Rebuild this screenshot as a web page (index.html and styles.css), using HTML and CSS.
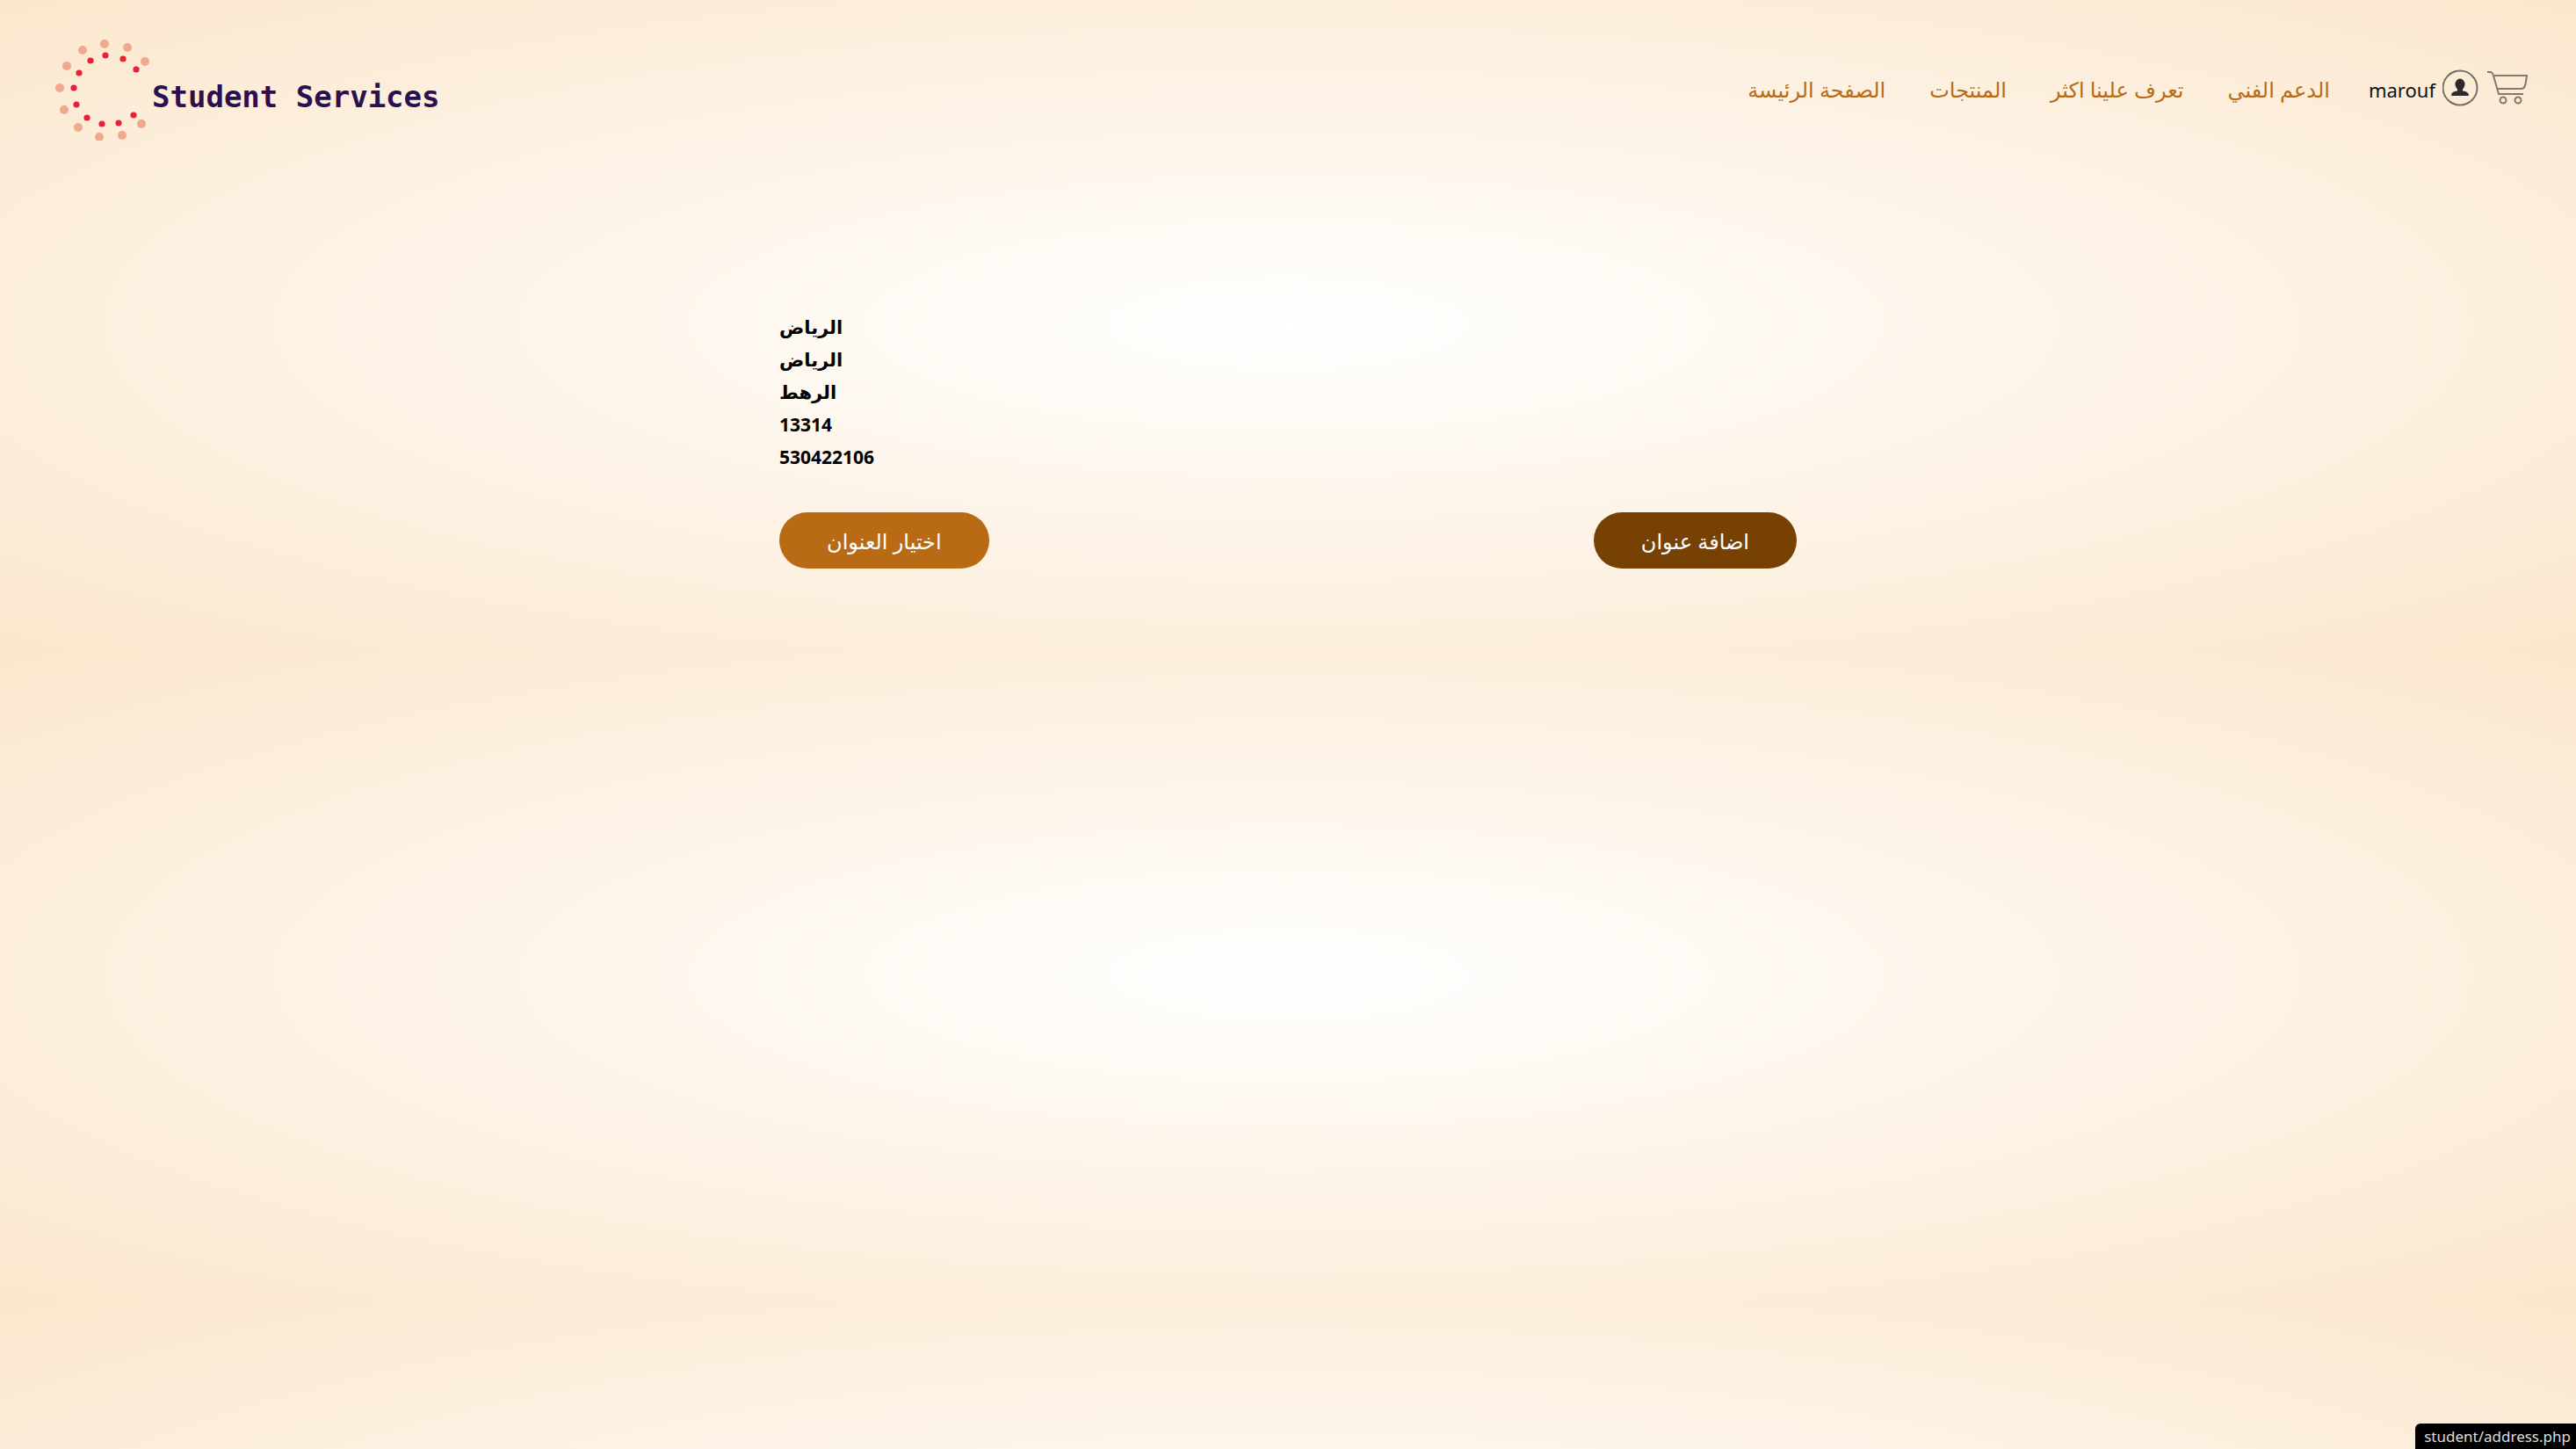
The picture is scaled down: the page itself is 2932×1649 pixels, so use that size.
FILE: index.html
```html
<!DOCTYPE html>
<html lang="ar">
<head>
<meta charset="utf-8">
<title>Student Services</title>
<link rel="stylesheet" href="styles.css">
</head>
<body>
<header class="header">
  <a class="logo" href="#">
    <svg class="logo-mark" width="110" height="120" viewBox="0 0 110 120" aria-hidden="true">
      <g fill="#efa98c">
        <circle cx="56" cy="10" r="5"/><circle cx="82" cy="14" r="5"/><circle cx="102" cy="30" r="5"/>
        <circle cx="31" cy="17" r="5"/><circle cx="13" cy="35" r="5"/><circle cx="5" cy="60" r="5"/>
        <circle cx="10" cy="85" r="5"/><circle cx="26" cy="105" r="5"/><circle cx="50" cy="116" r="5"/>
        <circle cx="76" cy="114" r="5"/><circle cx="98" cy="101" r="5"/>
      </g>
      <g fill="#ea2037">
        <circle cx="57" cy="23" r="3.6"/><circle cx="77" cy="27" r="3.6"/><circle cx="92" cy="39" r="3.6"/>
        <circle cx="40" cy="29" r="3.6"/><circle cx="27" cy="43" r="3.6"/><circle cx="21" cy="60" r="3.6"/>
        <circle cx="24" cy="79" r="3.6"/><circle cx="36" cy="94" r="3.6"/><circle cx="53" cy="101" r="3.6"/>
        <circle cx="72" cy="100" r="3.6"/><circle cx="89" cy="91" r="3.6"/>
      </g>
    </svg>
    <span class="logo-text">Student Services</span>
  </a>
  <div class="menu">
    <nav class="nav">
      <a href="#">الصفحة الرئيسة</a>
      <a href="#">المنتجات</a>
      <a href="#">تعرف علينا اكثر</a>
      <a href="#">الدعم الفني</a>
    </nav>
    <div class="account">
      <a class="user" href="#"><span class="user-name">marouf</span>
        <svg width="42" height="42" viewBox="0 0 42 42" aria-hidden="true">
          <circle cx="20" cy="21" r="19.5" fill="none" stroke="#77706a" stroke-width="2"/>
          <ellipse cx="20" cy="17" rx="5.5" ry="6.5" fill="#2b2b2d"/>
          <path d="M17 21h6v3.500q7 .500 7 5.500H10q0-5 7-5.500z" fill="#2b2b2d"/>
        </svg>
      </a>
      <a class="cart" href="#" aria-label="السلة">
        <svg width="48" height="42" viewBox="0 0 48 42" fill="none" stroke="#82796f" stroke-width="2" aria-hidden="true">
          <path d="M1 3h3q3 0 4 4l6 21h28M9 7h37l-1 7q-1 8-5 8H12"/>
          <circle cx="19" cy="35" r="3.5"/><circle cx="36" cy="35" r="3.5"/>
        </svg>
      </a>
    </div>
  </div>
</header>
<main class="content">
  <address class="address">
    <span>الرياض</span>
    <span>الرياض</span>
    <span>الرهط</span>
    <span>13314</span>
    <span>530422106</span>
  </address>
  <div class="actions">
    <button class="btn btn-select" type="button">اختيار العنوان</button>
    <button class="btn btn-add" type="button">اضافة عنوان</button>
  </div>
</main>
<div class="status">student/address.php</div>
</body>
</html>
```
FILE: styles.css
```css
* {
  box-sizing: border-box;
}

html {
  background: radial-gradient(#fff, #fbe7cd) 0 0 / 100% 740px;
}

body {
  margin: 0;
  font-family: "Noto Sans", "DejaVu Sans", sans-serif;
  font-size: 24px;
  color: #111;
}

a {
  color: inherit;
  text-decoration: none;
}

.header {
  display: flex;
  justify-content: space-between;
  align-items: center;
  padding: 40px 54px 0 63px;
}

.logo {
  display: flex;
  align-items: center;
}

.logo-text {
  padding-top: 20px;
  font: bold 34px/44px "DejaVu Sans Mono", monospace;
  color: #2b0f4e;
}

.menu,
.nav,
.account,
.user {
  display: flex;
  align-items: center;
}

.menu {
  gap: 44px;
}

.nav {
  gap: 50px;
  padding-top: 4px;
  line-height: 32px;
  color: #b86b14;
}

.account,
.user {
  gap: 8px;
}

.user-name {
  padding-top: 4px;
  font-size: 22px;
  line-height: 32px;
}

.user svg,
.cart svg {
  display: block;
}

.content {
  max-width: 1158px;
  margin: 0 auto;
  padding-top: 194px;
}

.address {
  display: grid;
  justify-items: start;
  font-size: 21px;
  font-style: normal;
  font-weight: bold;
  line-height: 37px;
  color: #000;
}

.actions {
  display: flex;
  justify-content: space-between;
  margin-top: 44px;
}

.btn {
  height: 64px;
  padding: 0 54px;
  border: 0;
  border-radius: 32px;
  font: inherit;
  color: #fff;
}

.btn-select {
  background: #b86b14;
}

.btn-add {
  background: #784104;
}

.status {
  position: fixed;
  right: 0;
  bottom: 0;
  padding: 0 6px 0 10px;
  border-top-left-radius: 6px;
  background: #000;
  color: #ddd;
  font-size: 17px;
  line-height: 29px;
}
```
